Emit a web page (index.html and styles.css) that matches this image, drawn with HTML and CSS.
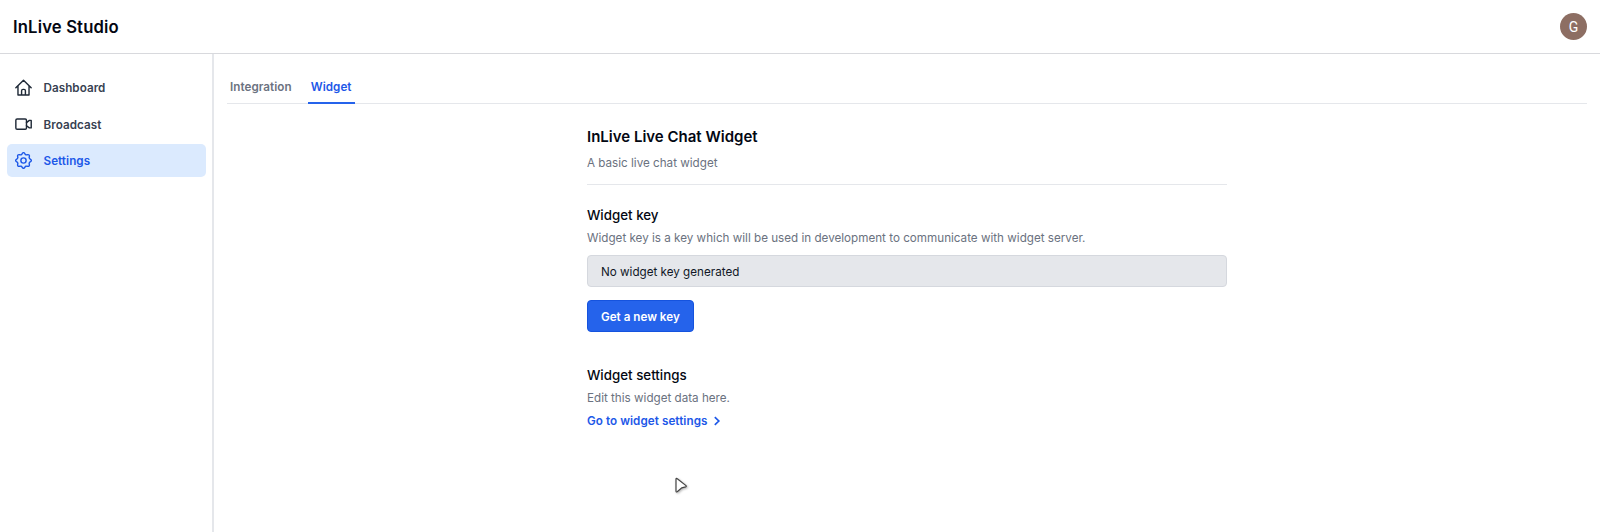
FILE: index.html
```html
<!DOCTYPE html>
<html lang="en">
<head>
<meta charset="utf-8">
<title>InLive Studio</title>
<link rel="stylesheet" href="styles.css">
</head>
<body>
<header class="header">
  <div class="brand">InLive Studio</div>
  <div class="avatar">G</div>
</header>
<div class="layout">
  <nav class="sidebar">
    <a class="nav-item">
      <svg class="icon" viewBox="0 0 24 24"><path d="M1.200 12.300 12 1.600 22.800 12.300M4.200 9.800V22.600h15.600V9.800M9.300 22.300v-5.600q0-2 2-2h1.400q2 0 2 2v5.600"/></svg>
      <span>Dashboard</span>
    </a>
    <a class="nav-item">
      <svg class="icon" viewBox="0 0 24 24"><rect x="1.200" y="4.200" width="15" height="14.400" rx="1.800"/><path d="M16.200 9.300 20.300 6.200H22.900V16.800H20.300L16.200 13.700"/></svg>
      <span>Broadcast</span>
    </a>
    <a class="nav-item active">
      <svg class="icon" viewBox="0 0 24 24"><circle cx="12" cy="12" r="3.700"/><path d="M8.600 3.800C10 3.800 10 .9 12 .9S14 3.800 15.400 3.800C16.400 4.700 18.400 2.700 19.850 4.150S19.300 7.600 20.200 8.600C20.200 10 23.100 10 23.100 12S20.200 14 20.200 15.400C19.300 16.400 21.300 18.400 19.850 19.850S16.400 19.300 15.400 20.200C14 20.200 14 23.100 12 23.100S10 20.200 8.600 20.200C7.600 19.300 5.600 21.300 4.150 19.850S4.700 16.400 3.800 15.400C3.800 14 .9 14 .9 12S3.800 10 3.800 8.600C4.700 7.600 2.700 5.600 4.150 4.150S7.600 4.700 8.600 3.800Z"/></svg>
      <span>Settings</span>
    </a>
  </nav>
  <main class="main">
    <div class="tabs">
      <a class="tab">Integration</a>
      <a class="tab current">Widget</a>
    </div>
    <div class="content">
      <h1 class="title">InLive Live Chat Widget</h1>
      <p class="text intro">A basic live chat widget</p>
      <h2 class="subtitle">Widget key</h2>
      <p class="text">Widget key is a key which will be used in development to communicate with widget server.</p>
      <div class="key-field">No widget key generated</div>
      <button class="button">Get a new key</button>
      <h2 class="subtitle">Widget settings</h2>
      <p class="text">Edit this widget data here.</p>
      <a class="link">Go to widget settings <svg class="chevron" viewBox="0 0 8 10"><path d="M1.800 1.200 5.800 5 1.800 8.800"/></svg></a>
    </div>
  </main>
</div>
<svg class="cursor" viewBox="0 0 16 18"><path d="M2 2.300Q2 .8 3.300 1.800L12 8.600Q12.800 9.500 11.600 9.900L7.800 10.900 3.200 14.800Q2 15.400 2 14Z"/></svg>
</body>
</html>
```
FILE: styles.css
```css
* { box-sizing: border-box; }
body {
  margin: 0;
  height: 532px;
  overflow: hidden;
  display: flex;
  flex-direction: column;
  background: #fff;
  color: #030712;
  font-family: Inter, sans-serif;
  font-size: 11.67px;
  line-height: 18px;
}
h1, h2, p { margin: 0; }
.header {
  height: 54px;
  flex: none;
  display: flex;
  align-items: center;
  justify-content: space-between;
  padding: 0 13px;
  border-bottom: 1px solid #d8d9dd;
}
.brand { font-size: 16.67px; font-weight: 600; letter-spacing: 0.15px; }
.avatar {
  width: 27px;
  height: 27px;
  border-radius: 50%;
  background: #8d6e63;
  color: #fff;
  font: 14px/28px Roboto, sans-serif;
  text-align: center;
}
.layout { flex: 1; display: flex; }
.sidebar {
  width: 214px;
  padding: 17px 6px 17px 7px;
  border-right: 2px solid #e5e7eb;
  display: flex;
  flex-direction: column;
  gap: 3.500px;
}
.nav-item {
  height: 33px;
  display: flex;
  align-items: center;
  gap: 11.500px;
  padding: 0 8px;
  border-radius: 5px;
  color: #374151;
  font-weight: 600;
  letter-spacing: 0.05px;
}
.active { background: #dbeafe; color: #1d58e8; }
.nav-item span { padding-top: 1px; }
.icon {
  width: 17px;
  height: 17px;
  fill: none;
  stroke: #1f2937;
  stroke-width: 2;
  stroke-linejoin: round;
  stroke-linecap: round;
}
.active .icon { stroke: #1d58e8; }
.main { flex: 1; padding: 16px 13px 0; }
.tabs {
  height: 34px;
  display: flex;
  gap: 13px;
  border-bottom: 1px solid #e5e7eb;
}
.tab {
  height: 34px;
  padding: 8px 3px 0;
  color: #6b7280;
  font-weight: 600;
  letter-spacing: 0.05px;
}
.current { color: #1d58e8; border-bottom: 2px solid #2563eb; }
.content {
  width: 640px;
  margin: 23px auto 0;
  display: flex;
  flex-direction: column;
  align-items: flex-start;
}
.title { font-size: 15px; line-height: 20px; font-weight: 600; }
.subtitle { font-size: 13.330px; line-height: 20px; font-weight: 500; }
.text { color: #6b7280; }
.intro {
  width: 100%;
  margin: 7px 0 20px;
  padding-bottom: 12px;
  border-bottom: 1px solid #e5e7eb;
}
.subtitle + .text { margin-top: 4px; }
.key-field {
  width: 100%;
  height: 32px;
  margin: 8px 0 13px;
  padding: 0 13px;
  border: 1px solid #d5d8de;
  border-radius: 4px;
  background: #e5e7eb;
  color: #111827;
  line-height: 32px;
}
.button {
  height: 32px;
  margin: 0 0 33px;
  padding: 1px 13px 0;
  border: 1px solid #1553de;
  border-radius: 4px;
  background: #2563eb;
  color: #fff;
  font: 600 11.67px/30px Inter, sans-serif;
}
.link {
  display: flex;
  align-items: center;
  gap: 6px;
  margin-top: 5px;
  color: #1d58e8;
  font-weight: 600;
  letter-spacing: 0.06px;
}
.chevron { width: 8px; height: 10px; fill: none; stroke: currentColor; stroke-width: 1.700; }
.cursor {
  position: absolute;
  left: 674px;
  top: 477px;
  width: 16px;
  height: 18px;
  fill: #fff;
  stroke: #444;
  stroke-width: 1.200;
  filter: drop-shadow(1px 1px 1px rgba(0, 0, 0, 0.3));
}
```
